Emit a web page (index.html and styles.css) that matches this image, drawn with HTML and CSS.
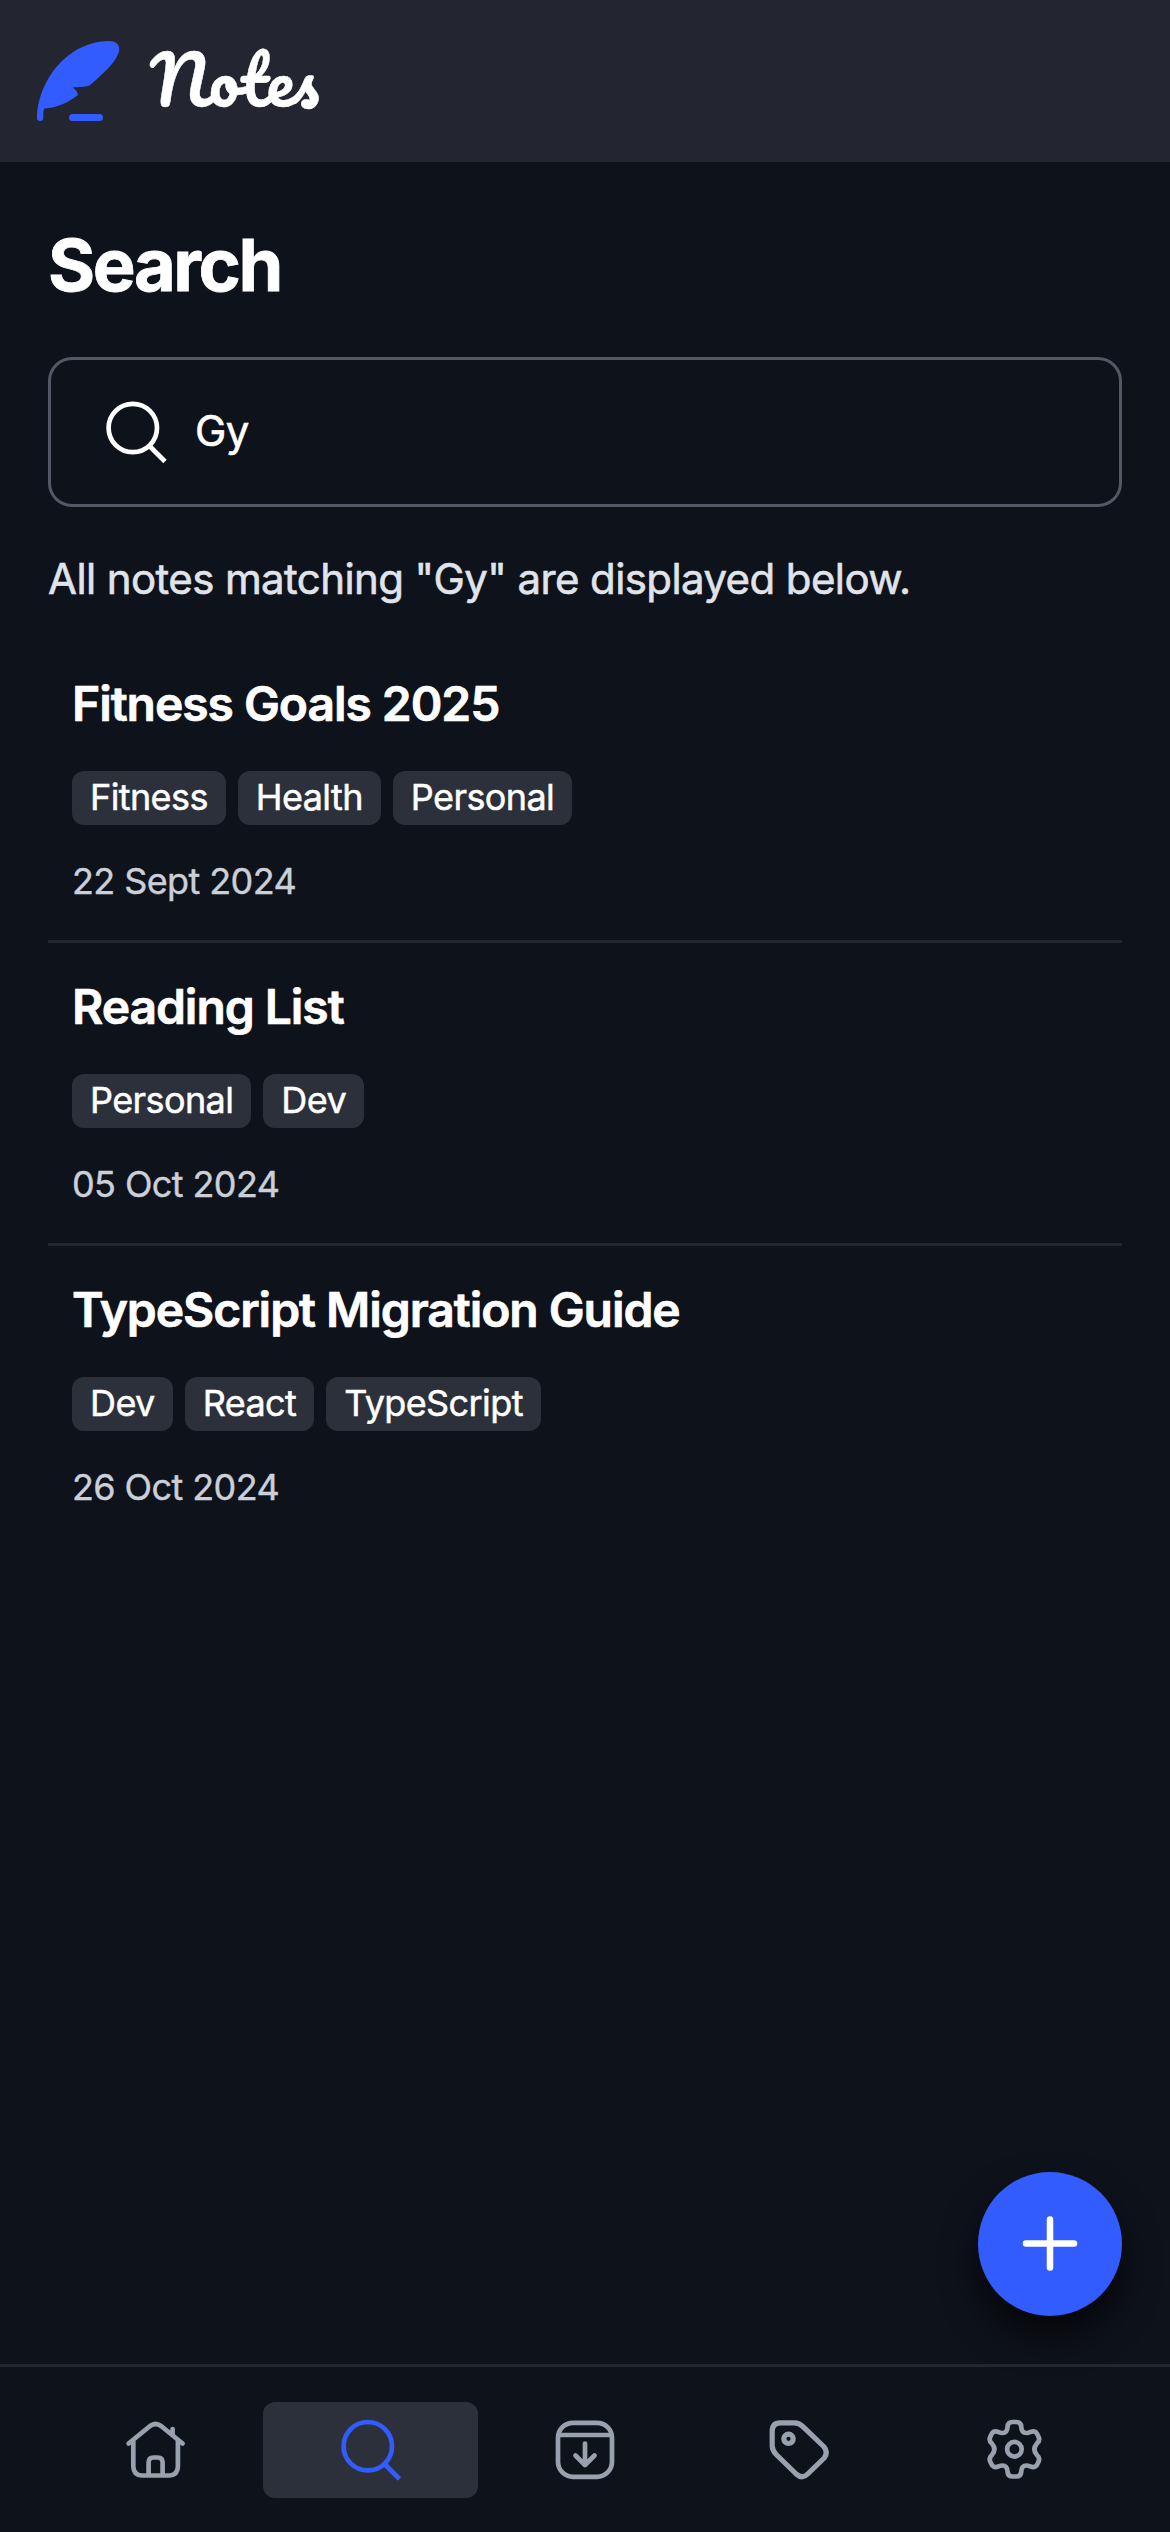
FILE: index.html
```html
<!DOCTYPE html>
<html lang="en">
<head>
<meta charset="utf-8">
<title>Notes</title>
<link rel="stylesheet" href="styles.css">
</head>
<body>
<div class="app">
  <header class="header">
    <svg class="logo-icon" width="84" height="84" viewBox="36 39 84 84" fill="none">
      <path d="M37 118C37 96 49 70 69 55C82 45 97 41 109 41C117 41 121 46 118.500 53C115 63 103 74 89.500 85.500C85 87.300 78 87 72.500 87.500C75.500 89 77.500 92 78 95C69 102 57 108 44.500 108.500C43 110 43.500 114 43.300 118A3.150 3 0 0 1 37 118Z" fill="#335cff"/>
      <path d="M72.500 117.500H99.500" stroke="#335cff" stroke-width="7" stroke-linecap="round"/>
    </svg>
    <span class="logo-text">Notes</span>
  </header>

  <main class="main">
    <h1 class="title">Search</h1>
    <label class="search">
      <svg class="search-icon" width="72" height="72" viewBox="0 0 72 72" fill="none" stroke="currentColor" stroke-width="4.700">
        <circle cx="33.800" cy="32" r="24.200"/><path d="M51 50.500L66 65.500"/>
      </svg>
      <span class="search-value">Gy</span>
    </label>
    <p class="hint">All notes matching "Gy" are displayed below.</p>

    <section class="notes">
      <article class="note">
        <h2 class="note-title">Fitness Goals 2025</h2>
        <div class="tags"><span class="tag">Fitness</span><span class="tag">Health</span><span class="tag">Personal</span></div>
        <time class="date">22 Sept 2024</time>
      </article>
      <article class="note">
        <h2 class="note-title">Reading List</h2>
        <div class="tags"><span class="tag">Personal</span><span class="tag">Dev</span></div>
        <time class="date">05 Oct 2024</time>
      </article>
      <article class="note">
        <h2 class="note-title">TypeScript Migration Guide</h2>
        <div class="tags"><span class="tag">Dev</span><span class="tag">React</span><span class="tag">TypeScript</span></div>
        <time class="date">26 Oct 2024</time>
      </article>
    </section>
    <button class="fab" aria-label="Create note">
      <svg width="60" height="60" viewBox="0 0 60 60" fill="none" stroke="#fff" stroke-width="6.500" stroke-linecap="round"><path d="M30 5.500V53.500M6 29.500H54"/></svg>
    </button>
  </main>

  <nav class="nav">
    <a class="nav-item"><svg width="72" height="72" viewBox="119.4 2413.5 72 72"><path d="M129 2443L150.500 2425.500Q156 2421.500 161.500 2425.500L183 2443M173 2428.500V2434M133.700 2440V2466Q134 2474.500 142 2475H170Q178 2474.500 178.300 2466V2440M149 2474V2462Q149 2457 154 2457H158Q163 2457 163 2462V2474"/></svg></a>
    <a class="nav-item nav-item-active"><svg width="72" height="72" viewBox="0 0 72 72"><circle cx="33.800" cy="32.200" r="24.200"/><path stroke-linecap="butt" d="M51 50.500L65.500 65"/></svg></a>
    <a class="nav-item"><svg width="72" height="72" viewBox="549 2413.5 72 72"><rect x="558" y="2422.300" width="54" height="54" rx="15"/><path d="M559 2434.500H611M585 2443V2464M575.500 2455L585 2464.500L594.500 2455"/></svg></a>
    <a class="nav-item"><svg class="icon-tag" width="72" height="72" viewBox="763.8 2413.5 72 72"><path d="M780 2422.300H794Q799 2422.300 802.500 2425.800L823.500 2446Q828.500 2451.700 824 2457.500L807.500 2473.500Q802 2479 796 2473.500L776 2454Q772 2450 772 2445V2431Q772 2422.300 780 2422.300Z"/><circle cx="788.300" cy="2438.300" r="4.700"/></svg></a>
    <a class="nav-item"><svg width="72" height="72" viewBox="978.6 2413.5 72 72"><circle cx="1014" cy="2448.750" r="7.300"/><path d="M1012 2421.500H1016Q1020.500 2421.500 1020.800 2426Q1021 2432.500 1026 2432.500Q1028 2432.500 1030 2431.500Q1034.500 2430 1036.500 2433L1038 2436Q1040 2440 1036.500 2443Q1031.500 2448.750 1036.500 2454.500Q1040 2457.500 1038 2461.500L1036.500 2464.500Q1034.500 2467.500 1030 2466Q1028 2465 1026 2465Q1021 2465 1020.800 2471.500Q1020.500 2476 1016 2476H1012Q1007.500 2476 1007.200 2471.500Q1007 2465 1002 2465Q1000 2465 998 2466Q993.500 2467.500 991.500 2464.500L990 2461.500Q988 2457.500 991.500 2454.500Q996.500 2448.750 991.500 2443Q988 2440 990 2436L991.500 2433Q993.500 2430 998 2431.500Q1000 2432.500 1002 2432.500Q1007 2432.500 1007.200 2426Q1007.500 2421.500 1012 2421.500Z"/></svg></a>
  </nav>
</div>
</body>
</html>
```

FILE: styles.css
```css
* { box-sizing: border-box; margin: 0; }
body { background: #0e121b; color: #fff; font-family: Inter, "Liberation Sans", sans-serif; }
.app { height: 2532px; display: flex; flex-direction: column; }
.header { height: 162px; flex: none; display: flex; align-items: center; gap: 30px; padding: 0 36px; background: #232530; }
.logo-text { font: 400 66.5px/1 Pacifico, cursive; padding-bottom: 3px; -webkit-text-stroke: 0.5px; }
.main { flex: 1; padding: 59px 48px 48px; display: flex; flex-direction: column; }
.title { font-size: 72px; line-height: 87px; font-weight: 700; letter-spacing: -2.4px; -webkit-text-stroke: 0.8px; }
.search { margin-top: 49px; height: 150px; border: 3px solid #525866; border-radius: 24px; padding: 0 48px; display: flex; align-items: center; gap: 24px; }
.search-value { font-size: 42px; line-height: 54px; padding-bottom: 2px; letter-spacing: -0.6px; -webkit-text-stroke: 0.6px; }
.hint { margin-top: 45px; font-size: 42px; line-height: 54px; letter-spacing: -0.6px; color: #e0e4ea; -webkit-text-stroke: 0.6px; }
.notes { margin-top: 31px; }
.note { height: 303px; padding: 38px 24px 0; display: flex; flex-direction: column; }
.note + .note { border-top: 3px solid #232530; padding-top: 35px; }
.note-title { font-size: 48px; line-height: 58px; font-weight: 600; letter-spacing: -1.05px; -webkit-text-stroke: 0.7px; }
.tags { margin-top: 38px; display: flex; gap: 12px; }
.tag { height: 54px; padding: 0 18px; border-radius: 12px; background: #2b303b; font-size: 36px; line-height: 52px; letter-spacing: -0.6px; -webkit-text-stroke: 0.5px; }
.date { margin-top: 35px; font-size: 36px; line-height: 43px; letter-spacing: -0.6px; color: #cacfd8; -webkit-text-stroke: 0.4px; }
.fab { width: 144px; height: 144px; margin-top: auto; align-self: flex-end; border: 0; border-radius: 50%; padding: 0; background: #335cff; display: flex; align-items: center; justify-content: center; box-shadow: 0 20px 36px rgba(0, 0, 0, 0.7); }
.nav { height: 168px; flex: none; border-top: 3px solid #232530; padding: 0 48px; display: flex; align-items: center; }
.nav-item { flex: 1; height: 96px; border-radius: 12px; color: #99a0ae; display: flex; align-items: center; justify-content: center; }
.nav-item svg { fill: none; stroke: currentColor; stroke-width: 4.7; stroke-linecap: round; stroke-linejoin: round; }
.nav-item .icon-tag { stroke-width: 5.2; }
.nav-item-active { background: #2b303b; color: #335cff; }
```
